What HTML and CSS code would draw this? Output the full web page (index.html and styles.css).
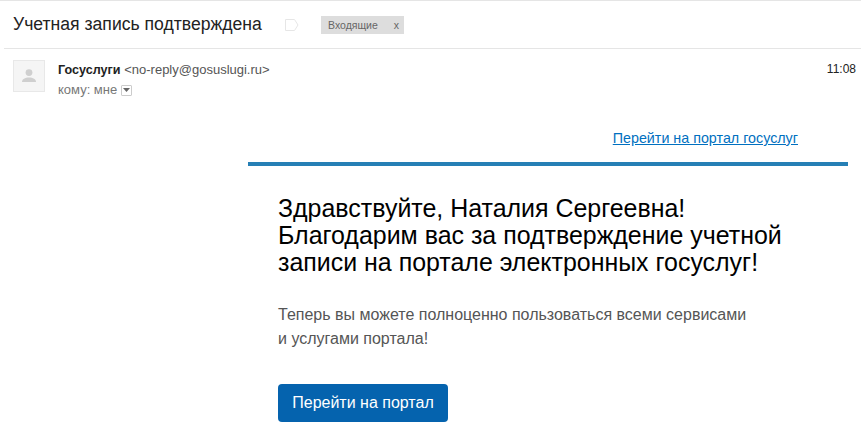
FILE: index.html
```html
<!DOCTYPE html>
<html lang="ru">
<head>
<meta charset="utf-8">
<title>Учетная запись подтверждена</title>
<link rel="stylesheet" href="styles.css">
</head>
<body>
<header class="subject-bar">
  <h1 class="subject">Учетная запись подтверждена</h1>
  <svg class="label-icon" width="14" height="12" viewBox="0 0 14 12"><path d="M.5.5h9l3.500 5.500-3.500 5.500H.5z" fill="#fff" stroke="#e6e6e6"/></svg>
  <span class="tag">Входящие<span class="tag-x">x</span></span>
</header>
<section class="meta">
  <div class="avatar">
    <svg width="14" height="14" viewBox="0 0 14 14"><circle cx="7" cy="3.600" r="3.400" fill="#cfcfcf"/><path d="M0 13c0-3 3-4.500 7-4.500s7 1.500 7 4.500z" fill="#cfcfcf"/></svg>
  </div>
  <div class="meta-text">
    <div class="sender"><b>Госуслуги</b> <span class="addr">&lt;no-reply@gosuslugi.ru&gt;</span></div>
    <div class="to">кому: мне <span class="caret"><svg width="7" height="4" viewBox="0 0 7 4"><path d="M0 0h7L3.500 4z" fill="#666"/></svg></span></div>
  </div>
  <time class="time">11:08</time>
</section>
<main class="mail">
  <div class="portal-link"><a href="#">Перейти на портал госуслуг</a></div>
  <div class="card">
    <h2 class="greeting">Здравствуйте, Наталия Сергеевна!<br>Благодарим вас за подтверждение учетной<br>записи на портале электронных госуслуг!</h2>
    <p class="lead">Теперь вы можете полноценно пользоваться всеми сервисами<br>и услугами портала!</p>
    <a class="button" href="#">Перейти на портал</a>
  </div>
</main>
</body>
</html>
```

FILE: styles.css
```css
* { box-sizing: border-box; }
html, body { margin: 0; padding: 0; }
body {
  width: 861px;
  height: 437px;
  overflow: hidden;
  background: #fff;
  font-family: "Liberation Sans", Arial, sans-serif;
  border-top: 1px solid #e5e5e5;
}
.subject-bar {
  display: flex;
  align-items: center;
  height: 48px;
  margin-left: 4px;
  padding-left: 9px;
  border-bottom: 1px solid #e5e5e5;
}
.subject {
  margin: 0;
  font-size: 17.600px;
  font-weight: 400;
  color: #222;
  width: 272px;
}
.label-icon { flex: none; margin-right: 22px; }
.tag {
  display: flex;
  justify-content: space-between;
  align-items: center;
  width: 83px;
  height: 18px;
  padding: 0 5px 0 7px;
  background: #dddddd;
  color: #666;
  font-size: 10.500px;
}
.meta {
  display: flex;
  align-items: flex-start;
  height: 75px;
  padding: 11px 4px 0 13px;
}
.avatar {
  display: flex;
  align-items: center;
  justify-content: center;
  width: 32px;
  height: 32px;
  background: #f5f5f5;
  border: 1px solid #e8e8e8;
  margin-right: 13px;
}
.meta-text { flex: 1; font-size: 13px; padding-top: 1px; }
.sender { height: 20px; line-height: 18px; color: #222; }
.sender b { font-size: 12.600px; }
.addr { color: #555; }
.to { color: #777; line-height: 18px; display: flex; align-items: center; gap: 4px; }
.caret {
  display: inline-flex;
  align-items: center;
  justify-content: center;
  width: 11px;
  height: 11px;
  border: 1px solid #ccc;
  border-radius: 1px;
}
.time { font-size: 12px; color: #222; line-height: 16px; margin-right: 1px; padding-top: 1px; }
.mail { margin-left: 248px; width: 600px; }
.portal-link {
  height: 42px;
  padding: 5px 50px 0 0;
  text-align: right;
  font-size: 14.300px;
  line-height: 18px;
  border-bottom: 4px solid #267fb5;
}
.portal-link a { color: #0070c0; }
.card { padding: 29px 30px 0; }
.greeting {
  margin: 0;
  font-size: 24.950px;
  font-weight: 400;
  line-height: 27px;
  color: #000;
}
.lead {
  margin: 27px 0 0;
  font-size: 16px;
  line-height: 24px;
  color: #555;
}
.button {
  display: block;
  width: 170px;
  height: 38px;
  margin-top: 33px;
  background: #0563ae;
  border-radius: 4px;
  color: #fff;
  font-size: 16px;
  line-height: 38px;
  text-align: center;
  text-decoration: none;
}
```
